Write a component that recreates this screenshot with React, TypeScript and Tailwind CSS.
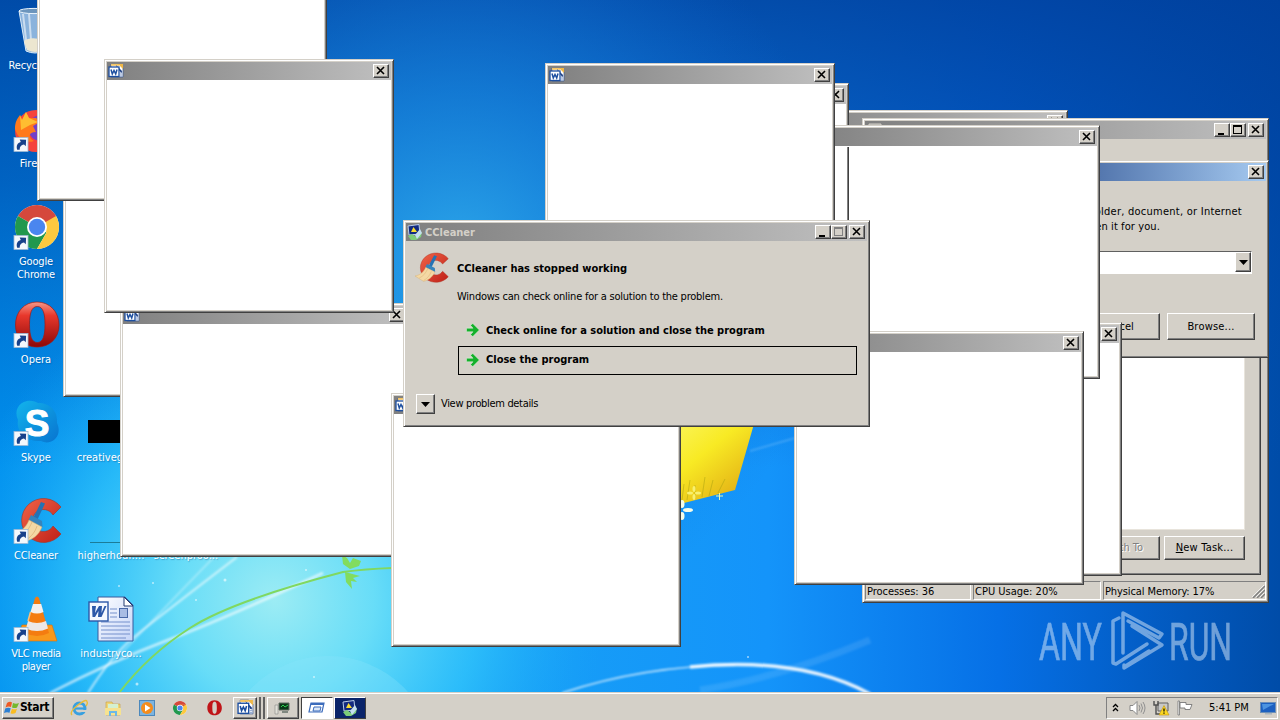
import React from "react";
import clsx from "clsx";

const FONT = "font-['DejaVu_Sans_Condensed','DejaVu_Sans',sans-serif] text-[11px] leading-[13px]";
const RAISED =
  "bg-[#d4d0c8] border border-t-white border-l-white border-r-[#404040] border-b-[#404040] shadow-[inset_-1px_-1px_0_#808080]";

/* ---------- icons ---------- */

const WordIcon = ({ className = "" }: { className?: string }) => (
  <svg viewBox="0 0 16 16" className={clsx("h-4 w-4 shrink-0", className)}>
    <path d="M3 1h8l4 4v9H3z" fill="#fff" stroke="#3a5a94" strokeWidth=".7" />
    <path d="M3 .8h8v2H3z" fill="#f3c566" />
    <path d="M10 1h5v5z" fill="#f0b848" />
    <path d="M12 9h2.500M12 11h2.500M12 13h2.500" stroke="#7a96c8" />
    <path d="M8 2l6 6-.5 2L9 5z" fill="#1c3e82" />
    <rect x="1" y="4" width="10" height="9.500" fill="#fff" stroke="#1d4fa0" strokeWidth="1.300" />
    <path d="M3 6.500l1.300 4.500L6 7.500 7.700 11 9 6.500" fill="none" stroke="#1d4fa0" strokeWidth="1.500" />
  </svg>
);

const Shortcut = () => (
  <g>
    <rect x="2" y="32.5" width="14" height="14" fill="#f4f8fc" stroke="#9db8d4" strokeWidth=".8" />
    <path d="M5.2 44.8c-1.2-4 .2-7 3.6-7.8L7.7 34.6l6.400.2-.3 6.400-1.800-1.800c-3.500.6-4.200 2.600-4.300 5.400z" fill="#17418a" />
  </g>
);

const Big = ({ children }: { children?: React.ReactNode }) => (
  <svg viewBox="0 0 48 48" className="h-12 w-12 shrink-0 overflow-visible">
    {children}
  </svg>
);

const BinIcon = () => (
  <Big>
    <path d="M7 4h30l-5 40q-9 4-18 0z" fill="#b8d4ec" fillOpacity=".75" stroke="#dcecf8" strokeWidth="1" />
    <path d="M11 7l4 34M17 7l2 26" stroke="#fff" strokeOpacity=".55" strokeWidth="2" />
    <path d="M12 34q6-5 20-1l-1 10q-8 4-16 0z" fill="#ece6d0" />
    <ellipse cx="22" cy="4" rx="15" ry="2.6" fill="#6c95bd" stroke="#eaf4fc" />
  </Big>
);

const FirefoxIcon = () => (
  <Big>
    <circle cx="24" cy="26" r="21" fill="#f5443c" />
    <circle cx="29" cy="23" r="13" fill="#7440c8" />
    <path d="M3 24c0-7 2-10 5-14l2 5 4-8 3 6h7l4 4-7 4 3 6c-8 0-8 6-2 9-8 3-16-2-19-12z" fill="#ff7a1c" />
    <path d="M8 10l2 5 4-8 3 6 9 4-8 3-9 5z" fill="#ffbd31" />
    <Shortcut />
  </Big>
);

const ChromeShape = () => (
  <g>
    <circle cx="25" cy="24" r="22" fill="#fff" />
    <path d="M25 24L5.950 13A22 22 0 0144.050 13z" fill="#d5483c" />
    <path d="M5.950 13A22 22 0 0025 46l9.500-16.500L25 24z" fill="#21984e" />
    <path d="M44.050 13A22 22 0 0125 46L34.500 29.500 25 13z" fill="#fdc93f" />
    <path d="M25 13h19.050L25 24z" fill="#d5483c" />
    <circle cx="25" cy="24" r="10" fill="#fff" />
    <circle cx="25" cy="24" r="8.200" fill="#4a86ef" />
  </g>
);

const ChromeIcon = () => (
  <Big>
    <ChromeShape />
    <Shortcut />
  </Big>
);

const OperaIcon = () => (
  <Big>
    <defs>
      <linearGradient id="opera" x1="0" y1="0" x2="0" y2="1">
        <stop offset="0" stopColor="#f59888" />
        <stop offset=".3" stopColor="#e8382c" />
        <stop offset="1" stopColor="#8c0808" />
      </linearGradient>
    </defs>
    <path
      fillRule="evenodd"
      d="M25 1C12 1 3.500 11 3.500 24S12 46 25 46s22-9 22-22S38 1 25 1zm.3 4.500c5.700 0 7.700 7 7.700 18s-2 18-7.700 18-7.800-7-7.800-18 2-18 7.800-18z"
      fill="url(#opera)"
      stroke="#a01812"
      strokeWidth=".7"
    />
    <Shortcut />
  </Big>
);

const SkypeIcon = () => (
  <Big>
    <defs>
      <linearGradient id="skype" x1="0" y1="0" x2="1" y2="1">
        <stop offset="0" stopColor="#12b4ec" />
        <stop offset="1" stopColor="#0874d0" />
      </linearGradient>
    </defs>
    <path d="M15 2c5-1 9 1 11 2 12 0 20 8 19 20 3 6 2 13-3 17-4 3-9 3-13 1C14 43 4 33 6 21 2 12 6 4 15 2z" fill="url(#skype)" />
    <text
      x="25"
      y="37"
      textAnchor="middle"
      fontSize="37"
      fontWeight="bold"
      fill="#fff"
      stroke="#fff"
      fontFamily="Liberation Sans, sans-serif"
    >
      S
    </text>
    <Shortcut />
  </Big>
);

const CCleanerShape = () => (
  <g>
    <defs>
      <linearGradient id="cc" x1="0" y1="0" x2="1" y2="1">
        <stop offset="0" stopColor="#f06448" />
        <stop offset="1" stopColor="#c02018" />
      </linearGradient>
    </defs>
    <path d="M49 10A22 22 0 1 0 49 37L41 29A11 11 0 1 1 41 18z" fill="url(#cc)" stroke="#a83020" strokeWidth=".6" />
    <path d="M29 5l4 1.500-8 17-4-2z" fill="#2472b4" />
    <path d="M19 18l11 6 .5 6-14-7z" fill="#3584bd" />
    <path d="M17 23l13 7c-3 8-10 13-16 14L2 36c6-1 12-5 15-13z" fill="#f4d8a4" stroke="#d0a868" strokeWidth=".5" />
    <path d="M8 39c6-3 9-7 12-14M14 43c6-4 9-8 11-14" stroke="#ddb478" fill="none" strokeWidth=".8" />
  </g>
);

const CCleanerIcon = () => (
  <Big>
    <CCleanerShape />
    <Shortcut />
  </Big>
);

const VlcIcon = () => (
  <Big>
    <path d="M10 30h30l5 16H5z" fill="#f8981c" stroke="#d87008" strokeWidth=".6" />
    <path d="M23 3q2-3 4 0l10 35q-12 6-24 0z" fill="#f47c10" />
    <path d="M21 9h8.200l2.300 8q-6.500 3-13 0z" fill="#f4f0ee" />
    <path d="M16 26q9 4 18 0l2 7.500q-11 5-22 0z" fill="#ece8e6" />
    <path d="M18.500 17l-2.500 9" stroke="#ffc078" strokeWidth="1.500" />
    <Shortcut />
  </Big>
);

const DocIcon = () => (
  <Big>
    <defs>
      <linearGradient id="doc" x1="0" y1="0" x2="1" y2="1">
        <stop offset="0" stopColor="#fff" />
        <stop offset="1" stopColor="#c4d4f8" />
      </linearGradient>
    </defs>
    <path d="M11 2h27l8 8v36H11z" fill="url(#doc)" stroke="#385a9c" />
    <path d="M37 2v9h9z" fill="#fff" stroke="#223a70" />
    <path d="M23 14h7M23 18h7M23 22h7M14 27h29M14 31h29M14 35h29M14 39h29M14 43h25" stroke="#7490cc" />
    <rect x="32.500" y="13.500" width="8" height="9" fill="#a8bce4" stroke="#4868a8" />
    <rect x="2" y="7" width="19" height="19" fill="#f4f8ff" stroke="#2c58a8" strokeWidth="1.400" />
    <path d="M5 11h4l-1 7 4-7h3l-.5 7 3-7h2l-5 11h-3.500l.5-6-3.500 6H5.500z" fill="#2c58a8" />
  </Big>
);

const BlackThumb = () => (
  <Big>
    <rect x="1" y="21" width="48" height="23" fill="#000" />
  </Big>
);

const LineThumb = () => (
  <Big>
    <path d="M3 45.500h45" stroke="#1c7c98" />
  </Big>
);

const CrashIcon = () => (
  <svg viewBox="0 0 16 16" className="h-4 w-4 shrink-0">
    <path d="M1 2l11-1.500 1 9.500-11 1z" fill="#122a80" stroke="#b8cce8" />
    <path d="M6.500 3L10 8H4z" fill="#f8dc30" />
    <path d="M1 12l4-2 4 3 6-5-1 5-5 3H4z" fill="#7ccc78" />
    <path d="M8 11l5-6 2 4-5 6z" fill="#c4dfee" />
  </svg>
);

const MonitorIcon = () => (
  <svg viewBox="0 0 16 16" className="h-4 w-4 shrink-0">
    <path d="M3 2h12v9H3z" fill="#a8a8a4" stroke="#d4d0c8" />
    <path d="M6 13h7v2H6z" fill="#808080" />
  </svg>
);

const GreenArrow = () => (
  <svg viewBox="0 0 14 14" className="h-3.5 w-3.5 shrink-0">
    <path
      d="M.5 5.200h6.500L4.500 2.300 6.800.5 13.300 7l-6.500 6.500-2.300-1.800 2.500-2.900H.5z"
      fill="#14b02c"
      stroke="#e4f4e0"
      strokeWidth=".5"
    />
  </svg>
);

/* ---------- window chrome ---------- */

const CaptionButton = ({ kind, disabled }: { kind: "min" | "max" | "close"; disabled?: boolean }) => (
  <div className={clsx("flex h-3.5 w-4 shrink-0 items-center justify-center", RAISED)}>
    <svg viewBox="0 0 14 12" className="h-3 w-3.5" shapeRendering={kind === "close" ? "auto" : "crispEdges"}>
      {kind === "min" && <path d="M3 9h6v2H3z" fill="#000" />}
      {kind === "max" && (
        <g fill="none" stroke={disabled ? "#808080" : "#000"}>
          <path d="M2.500 1.500h8v8h-8z" />
          <path d="M2 2.500h9" />
        </g>
      )}
      {kind === "close" && <path d="M3 2l7 7M10 2L3 9" stroke="#000" strokeWidth="1.600" />}
    </svg>
  </div>
);

interface WindowProps {
  className: string;
  title?: string;
  icon?: React.ReactNode;
  active?: boolean;
  buttons?: "close" | "all" | "fixed";
  children?: React.ReactNode;
}

const Window = ({ className, title, icon, active, buttons = "close", children }: WindowProps) => (
  <section
    className={clsx(
      "absolute flex flex-col border border-t-[#d4d0c8] border-l-[#d4d0c8] border-r-[#404040] border-b-[#404040] bg-[#d4d0c8] p-0.5 shadow-[inset_1px_1px_0_#fff,inset_-1px_-1px_0_#808080]",
      className
    )}
  >
    <header
      className={clsx(
        "flex h-[18px] shrink-0 items-center bg-linear-to-r pr-0.5 pl-px",
        active ? "from-[#0a246a] to-[#a6caf0]" : "from-[#808080] to-[#c0c0c0]"
      )}
    >
      {icon}
      <span className="ml-0.5 grow font-bold text-[#d4d0c8]">{title}</span>
      {buttons !== "close" && (
        <>
          <CaptionButton kind="min" />
          <CaptionButton kind="max" disabled={buttons === "fixed"} />
          <span className="w-0.5" />
        </>
      )}
      <CaptionButton kind="close" />
    </header>
    {children}
  </section>
);

const BlankWindow = ({ className }: { className: string }) => (
  <Window className={clsx("h-[254px] w-[290px]", className)} icon={<WordIcon />}>
    <div className="grow bg-white" />
  </Window>
);

const Button = ({ className, children }: { className: string; children: React.ReactNode }) => (
  <div className={clsx("flex shrink-0 items-center justify-center", RAISED, className)}>{children}</div>
);

const DropArrow = () => (
  <svg viewBox="0 0 9 5" className="h-[5px] w-[9px]">
    <path d="M0 0h9L4.500 5z" fill="#000" />
  </svg>
);

const TaskManager = () => (
  <Window className="top-[118px] left-[862px] h-[485px] w-[407px]" buttons="all" icon={<MonitorIcon />}>
    <div className="flex grow flex-col pt-10">
      <div className="mr-[5px] ml-1 flex grow flex-col border border-t-white border-l-white border-r-[#404040] border-b-[#404040] px-[15px] pt-4 pb-[14px] shadow-[inset_-1px_-1px_0_#808080]">
        <div className="grow border border-[#e8e4dc] border-t-[#808080] bg-white" />
        <div className="mt-[6px] flex justify-end gap-1">
          <Button className="h-6 w-20 pb-px text-[#808080] [text-shadow:1px_1px_0_#fff]">Switch To</Button>
          <Button className="h-6 w-[81px] pb-px">
            <span className="tracking-[0.2px]">
              <u>N</u>ew Task...
            </span>
          </Button>
        </div>
      </div>
      <footer className="mt-1.5 flex h-[19px] gap-0.5">
        <div className="w-[106px] border border-t-[#808080] border-l-[#808080] border-r-white border-b-white pt-[3px] pl-px tracking-[-0.05px]">
          Processes: 36
        </div>
        <div className="w-[128px] border border-t-[#808080] border-l-[#808080] border-r-white border-b-white pt-[3px] pl-px">
          CPU Usage: 20%
        </div>
        <div className="flex grow justify-between border border-t-[#808080] border-l-[#808080] border-r-white border-b-white pt-[3px] pl-px">
          <span className="tracking-[-0.1px]">Physical Memory: 17%</span>
          <svg viewBox="0 0 13 13" className="h-[13px] w-[13px]">
            <path d="M1 13L13 1M5 13l8-8M9 13l4-4" stroke="#808080" strokeWidth="1.500" />
            <path d="M0 12L12 0M4 12l8-8M8 12l4-4" stroke="#fff" strokeWidth=".7" />
          </svg>
        </div>
      </footer>
    </div>
  </Window>
);

const RunDialog = () => (
  <Window className="top-[160px] left-[921px] h-[198px] w-[348px]" active>
    <div className="flex grow flex-col pr-[9px] pb-[15px]">
      <p className="mt-[23px] ml-14 leading-[15px] tracking-[0.1px] whitespace-nowrap">
        <span className="flex w-[262px] justify-end tracking-[0.25px]">
          Type the name of a program, folder, document, or Internet
        </span>
        <span className="flex w-[180px] justify-end">resource, and Windows will open it for you.</span>
      </p>
      <div className="mt-[17px] mr-[5px] ml-14 flex h-[23px] justify-end border border-t-[#606060] border-l-[#606060] border-r-white border-b-white bg-white">
        <Button className="h-5 w-4">
          <DropArrow />
        </Button>
      </div>
      <div className="mt-auto flex justify-end gap-[7px]">
        <Button className="h-[27px] w-[86px] pb-px">Cancel</Button>
        <Button className="mr-0.5 h-[27px] w-[88px] pb-px">
          <span className="tracking-[0.2px]">Browse...</span>
        </Button>
      </div>
    </div>
  </Window>
);

const CCleanerDialog = () => (
  <Window
    className="top-[220px] left-[403px] h-[207px] w-[467px]"
    title="CCleaner"
    buttons="fixed"
    icon={<CrashIcon />}
  >
    <div className="flex grow flex-col px-[10px] pt-[11px]">
      <div className="flex">
        <svg viewBox="2 0 48 48" className="-ml-px h-8 w-[34px] shrink-0" preserveAspectRatio="none">
          <CCleanerShape />
        </svg>
        <div className="ml-2 grow pt-[10px]">
          <h1 className="font-bold">CCleaner has stopped working</h1>
          <p className="mt-[15px] tracking-[-0.23px]">Windows can check online for a solution to the problem.</p>
        </div>
      </div>
      <div className="mt-[13px] ml-[42px] flex h-[30px] items-center gap-1.5 pb-0.5 pl-2 font-bold">
        <GreenArrow />
        <span>Check online for a solution and close the program</span>
      </div>
      <div className="ml-[42px] flex h-[29px] w-[399px] items-center gap-1.5 border border-black pb-0.5 pl-[7px] font-bold">
        <GreenArrow />
        <span>Close the program</span>
      </div>
      <div className="mt-[19px] flex">
        <Button className="h-5 w-[19px]">
          <DropArrow />
        </Button>
        <span className="mt-[3px] ml-[6px] tracking-[-0.33px]">View problem details</span>
      </div>
    </div>
  </Window>
);

/* ---------- desktop ---------- */

const Wallpaper = () => (
  <svg viewBox="0 0 1280 720" className="absolute inset-0 h-full w-full">
    <defs>
      <linearGradient id="base" x1="0" x2="1" y1="0" y2="0">
        <stop offset="0" stopColor="#0090ee" />
        <stop offset=".3" stopColor="#18a4f4" />
        <stop offset=".6" stopColor="#1494fa" />
        <stop offset=".78" stopColor="#0670e6" />
        <stop offset="1" stopColor="#004ca8" />
      </linearGradient>
      <linearGradient id="top" x1="0" x2="0" y1="0" y2="1">
        <stop offset="0" stopColor="#003f9c" stopOpacity=".85" />
        <stop offset=".25" stopColor="#0044a4" stopOpacity=".6" />
        <stop offset=".65" stopColor="#0050b0" stopOpacity="0" />
      </linearGradient>
      <radialGradient id="sky" gradientUnits="userSpaceOnUse" cx="460" cy="250" r="380">
        <stop offset="0" stopColor="#2ea8ea" stopOpacity=".9" />
        <stop offset=".4" stopColor="#1c8ee6" stopOpacity=".6" />
        <stop offset="1" stopColor="#1070dc" stopOpacity="0" />
      </radialGradient>
      <radialGradient id="glow" gradientUnits="userSpaceOnUse" cx="275" cy="600" r="330">
        <stop offset="0" stopColor="#9cecf4" />
        <stop offset=".3" stopColor="#6ce0f8" stopOpacity=".95" />
        <stop offset=".62" stopColor="#34c8fc" stopOpacity=".7" />
        <stop offset="1" stopColor="#18a8f8" stopOpacity="0" />
      </radialGradient>
      <linearGradient id="flag" x1="0" x2="1" y1="0" y2="1">
        <stop offset="0" stopColor="#fcfc80" />
        <stop offset=".5" stopColor="#f8ea24" />
        <stop offset="1" stopColor="#dc9c10" />
      </linearGradient>
      <filter id="soft">
        <feGaussianBlur stdDeviation=".8" />
      </filter>
    </defs>
    <rect width="1280" height="720" fill="url(#base)" />
    <rect width="1280" height="720" fill="url(#top)" />
    <rect width="1280" height="720" fill="url(#sky)" />
    <rect width="1280" height="720" fill="url(#glow)" />
    <circle cx="328" cy="763" r="107" fill="#8ce4fc" fillOpacity=".3" />
    <g fill="none" stroke="#fff" filter="url(#soft)">
      <path d="M50 693Q110 662 168 640T323 573" strokeWidth="2.500" strokeOpacity=".65" />
      <path d="M88 693Q112 655 134 637T237 557" strokeWidth="2" strokeOpacity=".65" />
      <path d="M120 655Q145 628 214 557" strokeWidth="1.200" strokeOpacity=".45" />
      <path d="M750 451l45-13" strokeOpacity=".35" />
      <path d="M562 693Q643 666 735 665" strokeWidth="1.500" strokeOpacity=".75" />
      <path d="M690 667Q800 656 870 694" strokeWidth="3.500" strokeOpacity=".9" />
      <path d="M700 690Q780 678 870 640" strokeWidth="7" strokeOpacity=".1" />
    </g>
    <path d="M119 693Q148 655 190 628T343 572Q365 569 392 568" fill="none" stroke="#80d860" strokeWidth="2" />
    <path
      d="M342 555l5 3 3 5 3-5 8 3-2 5-9 3-7-5zM345 572l15 4-7 2 4 4-6-1 1 8-6-7z"
      fill="#84dc4c"
      fillOpacity=".9"
    />
    <path d="M640 410h118l-23 80-55 14h-40z" fill="url(#flag)" />
    <path d="M682 500l2-16M687 500l3-20M695 499v-14M702 497l3-20M709 496l4-16M718 493l7-14" fill="none" stroke="#a8a010" strokeOpacity=".5" />
    <g fill="#f8f070">
      <ellipse cx="694" cy="489" rx="1.500" ry="3" />
      <ellipse cx="694" cy="497" rx="1.500" ry="3" />
      <ellipse cx="690" cy="493" rx="3" ry="1.500" />
      <ellipse cx="698" cy="493" rx="3" ry="1.500" />
    </g>
    <path d="M716 496h7M719.500 493v7" stroke="#e8f8b0" />
    <g fill="#f4fce8">
      <ellipse cx="682" cy="504" rx="2.500" ry="4" />
      <ellipse cx="688" cy="510" rx="5" ry="2" />
      <ellipse cx="682" cy="516" rx="2.500" ry="4" />
    </g>
    <g fill="#fff" fillOpacity=".6">
      <circle cx="225" cy="580" r="1.500" />
      <circle cx="119" cy="586" r="1" />
      <circle cx="153" cy="583" r="1" />
      <circle cx="137" cy="684" r="1.500" />
      <circle cx="314" cy="677" r="1" />
      <circle cx="748" cy="657" r="1" />
      <circle cx="196" cy="600" r="1" />
      <circle cx="306" cy="570" r="1" />
    </g>
  </svg>
);

const items: { label: string; icon: React.ReactNode; place: string }[] = [
  { label: "Recycle Bin", icon: <BinIcon />, place: "col-start-1 row-start-1 tracking-[-0.2px]" },
  { label: "Firefox", icon: <FirefoxIcon />, place: "col-start-1 row-start-2" },
  { label: "Google Chrome", icon: <ChromeIcon />, place: "col-start-1 row-start-3 tracking-[-0.15px]" },
  { label: "Opera", icon: <OperaIcon />, place: "col-start-1 row-start-4" },
  { label: "Skype", icon: <SkypeIcon />, place: "col-start-1 row-start-5" },
  { label: "CCleaner", icon: <CCleanerIcon />, place: "col-start-1 row-start-6 tracking-[-0.15px]" },
  { label: "VLC media player", icon: <VlcIcon />, place: "col-start-1 row-start-7 tracking-[-0.4px]" },
  { label: "creativegro....", icon: <BlackThumb />, place: "col-start-2 row-start-5" },
  { label: "higherhour....", icon: <LineThumb />, place: "col-start-2 row-start-6 tracking-[0.1px]" },
  { label: "industryco...", icon: <DocIcon />, place: "col-start-2 row-start-7" },
  { label: "screenproo...", icon: <Big />, place: "col-start-3 row-start-6" },
];

const DesktopIcons = () => (
  <div className="absolute top-[7px] -left-0.5 grid grid-cols-[76px_74px_76px] grid-rows-[repeat(7,98px)]">
    {items.map((item) => (
      <div key={item.label} className={clsx("flex flex-col items-center", item.place)}>
        {item.icon}
        <span className="mt-1 w-[72px] text-center text-white [text-shadow:1px_1px_1px_rgba(0,60,120,0.35)]">
          {item.label}
        </span>
      </div>
    ))}
  </div>
);

const Watermark = () => (
  <svg viewBox="0 0 200 70" className="absolute top-[607px] left-[1035px] h-[70px] w-[200px] overflow-visible opacity-50">
    <g fill="#dcebfa" stroke="#dcebfa" strokeWidth=".6" fontFamily="Roboto, sans-serif" fontSize="52">
      <text x="4" y="53" textLength="63" lengthAdjust="spacingAndGlyphs">
        ANY
      </text>
      <text x="134" y="53" textLength="63" lengthAdjust="spacingAndGlyphs">
        RUN
      </text>
    </g>
    <path
      d="M84 11l-6 3v42l3 1 31-20M88 46V6l39 21-3 4-31-17M89 58v3l38-23-30-19M89 60l25-16"
      fill="none"
      stroke="#dcebfa"
      strokeWidth="3.500"
      strokeLinejoin="round"
      strokeLinecap="round"
    />
  </svg>
);

/* ---------- taskbar ---------- */

const Small = ({ children }: { children: React.ReactNode }) => (
  <svg viewBox="0 0 18 18" className="h-[18px] w-[18px] shrink-0">
    {children}
  </svg>
);

const Taskbar = () => (
  <footer className="absolute inset-x-0 bottom-0 flex h-7 items-center border-t border-[#d4d0c8] bg-[#d4d0c8] pr-0.5 pl-0.5 shadow-[inset_0_1px_0_#fff]">
    <Button className="mt-0.5 h-[22px] w-[52px] pr-[3px]">
      <svg viewBox="0 0 16 16" className="h-4 w-4">
        <path d="M3 3q3-2 5-.5L7 7Q4.500 6 1.500 7.500z" fill="#ee5a24" />
        <path d="M9 3q3 1.500 6 0l-2 4.500q-2 1-5 0z" fill="#74b82c" />
        <path d="M1.200 8.500q3-1.500 5.500-.2l-1.200 4.500Q3 11.500 0 13z" fill="#2c80d4" />
        <path d="M8 8.700q2.500 1.300 5 0L11.500 13q-2.500 1.500-5 .2z" fill="#fabc20" />
      </svg>
      <span className="text-[12px] font-bold tracking-[-0.3px]">Start</span>
    </Button>
    <div className="mt-0.5 ml-4 flex items-center gap-4">
      <Small>
        <circle cx="9.500" cy="9.500" r="5.500" fill="none" stroke="#38a0e0" strokeWidth="3" />
        <path d="M4 9.500h11" stroke="#38a0e0" strokeWidth="2.200" />
        <path d="M12 11h6v2h-7z" fill="#d4d0c8" />
        <path d="M2 16Q-1 13 8 6t9-3q1 1-1 4" fill="none" stroke="#e8bc38" strokeWidth="1.400" />
      </Small>
      <Small>
        <path d="M2 3h6l1 2h7v11H2z" fill="#f0d474" stroke="#c8a040" strokeWidth=".6" />
        <path d="M4 5h10v4H4z" fill="#d4f0d0" />
        <path d="M1 9h16v7H1z" fill="#f6e290" />
        <path d="M5 17v-5h8v5h-2v-3H7v3z" fill="#6cb8e8" />
      </Small>
      <Small>
        <rect x="1.500" y="1.500" width="15" height="15" fill="#7cb4e0" stroke="#4c88bc" />
        <circle cx="9" cy="9" r="6" fill="#f48c1c" />
        <path d="M7 5.500v7L12.500 9z" fill="#fff" />
      </Small>
      <svg viewBox="0 -4 50 56" className="h-[18px] w-[16px]">
        <ChromeShape />
      </svg>
      <svg viewBox="0 0 50 48" className="ml-0.5 h-4 w-[17px]">
        <path
          fillRule="evenodd"
          d="M25 1C12 1 3.500 11 3.500 24S12 46 25 46s22-9 22-22S38 1 25 1zm.3 4.500c5.700 0 6.700 7 6.700 18s-1 18-6.700 18-6.800-7-6.800-18 1-18 6.800-18z"
          fill="#c01418"
        />
      </svg>
    </div>
    <div className="mt-0.5 ml-[10px] flex">
      <Button className="h-[22px] w-6">
        <WordIcon className="h-[17px] w-[17px]" />
      </Button>
      <div className="h-[22px] w-1 border-r-2 border-[#606060]" />
      <div className="h-[22px] w-1 border-r-2 border-[#606060]" />
    </div>
    <Button className="mt-0.5 ml-0.5 h-[22px] w-8">
      <Small>
        <path d="M5 4h10v7H5z" fill="#083818" stroke="#606860" />
        <path d="M7 8l2-2 2 2 3-2" fill="none" stroke="#30d050" />
        <path d="M8 12h6v2H8z" fill="#808880" />
        <path d="M1 6h3v9H1z" fill="#e0e0d8" stroke="#888" strokeWidth=".6" />
      </Small>
    </Button>
    <div className="mt-0.5 ml-0.5 flex h-[22px] w-8 items-center justify-center border border-t-[#404040] border-l-[#404040] border-r-white border-b-white bg-white">
      <Small>
        <path d="M3 4h13l-2 9H1z" fill="#fff" stroke="#3c6cbc" strokeWidth="1.200" />
        <path d="M3 4h13v2H2.500z" fill="#3c6cbc" />
        <path d="M6 8h7l-1 4H5z" fill="#dce8f8" stroke="#3c6cbc" />
      </Small>
    </div>
    <Button className="mt-0.5 ml-px h-[22px] w-8">
      <span className="flex h-full w-full items-center justify-center bg-[#0a246a]">
        <CrashIcon />
      </span>
    </Button>
    <div className="mt-0.5 ml-auto flex h-[22px] w-[172px] items-center border border-t-[#808080] border-l-[#808080] border-r-white border-b-white pl-[5px]">
      <svg viewBox="0 0 7 9" className="h-[9px] w-[7px] shrink-0">
        <path d="M1 4l2.500-2.500L6 4M1 8l2.500-2.500L6 8" fill="none" stroke="#000" strokeWidth="1.300" />
      </svg>
      <svg viewBox="0 0 18 16" className="ml-[9px] h-4 w-[18px] shrink-0">
        <path d="M2 5.500h3l4-4v13l-4-4H2z" fill="#fff" stroke="#888" />
        <path d="M11 5q2 3 0 6M13 3.500q3 4.500 0 9M15 2q4 6 0 12" fill="none" stroke="#909090" />
      </svg>
      <svg viewBox="0 0 18 16" className="ml-1.5 h-4 w-[18px] shrink-0">
        <path d="M6 3h10v8H6z" fill="#c8c8c8" stroke="#606060" />
        <path d="M2 1v4h4V1M4 5v9h5" fill="none" stroke="#505050" strokeWidth="1.400" />
        <path d="M12 5.500l5 9.500H7z" fill="#fcd820" stroke="#c09010" strokeWidth=".6" />
        <path d="M12 8.500v3M12 12.500v1.300" stroke="#000" strokeWidth="1.200" />
      </svg>
      <svg viewBox="0 0 18 16" className="ml-1.5 h-4 w-[18px] shrink-0">
        <path d="M2 1h1.500v14H2z" fill="#fff" stroke="#777" strokeWidth=".8" />
        <path d="M4 2.500h6v2h6l-2 5H9v-1.500H4z" fill="#fff" stroke="#777" strokeWidth=".9" />
      </svg>
      <span className="ml-[15px] whitespace-nowrap">5:41 PM</span>
      <svg viewBox="0 0 16 14" className="mr-px ml-auto h-[14px] w-4 shrink-0">
        <rect x=".5" y="1.500" width="15" height="10" fill="#1c60c0" stroke="#6c90b8" />
        <path d="M2 3h12L3 9z" fill="#4c94e0" />
        <path d="M5 12h7v1.500H5z" fill="#aab4bc" />
      </svg>
    </div>
  </footer>
);

export default function App() {
  return (
    <main className={clsx("relative h-[720px] w-[1280px] overflow-hidden text-black", FONT)}>
      <Wallpaper />
      <DesktopIcons />
      <BlankWindow className="top-[143px] left-[63px]" />
      <BlankWindow className="top-[-53px] left-[37px]" />
      <BlankWindow className="top-[303px] left-[120px]" />
      <BlankWindow className="top-[59px] left-[104px]" />
      <BlankWindow className="top-[110px] left-[778px]" />
      <BlankWindow className="top-[83px] left-[559px]" />
      <TaskManager />
      <RunDialog />
      <BlankWindow className="top-[322px] left-[832px]" />
      <BlankWindow className="top-[125px] left-[810px]" />
      {/* stale edge that the unpainted client area leaves behind */}
      <div className="absolute top-[147px] left-[847px] h-[80px] w-0.5 border-r border-[#404040] bg-[#808080]" />
      <BlankWindow className="top-[63px] left-[545px]" />
      <BlankWindow className="top-[331px] left-[794px]" />
      <BlankWindow className="top-[393px] left-[391px]" />
      <CCleanerDialog />
      <Watermark />
      <Taskbar />
    </main>
  );
}
